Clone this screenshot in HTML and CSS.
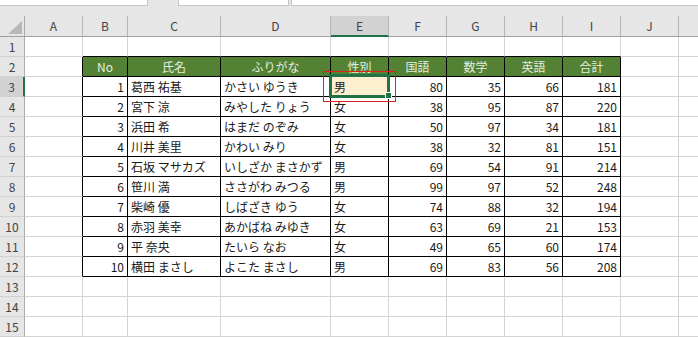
FILE: index.html
```html
<!DOCTYPE html>
<html lang="ja">
<head>
  <meta charset="UTF-8">
  <title>成績表</title>
  <link rel="stylesheet" href="styles.css">
</head>
<body>
  <div class="topbar">
    <div class="box box1"></div>
    <div class="box box2"></div>
    <div class="box box3"></div>
  </div>
  <div class="gap"></div>

  <div class="sheet">
    <div class="corner"><svg width="14" height="13" viewBox="0 0 14 13"><polygon points="0,13 14,13 14,0" fill="#b8b8b8"/></svg></div>
    <div class="cell ch">A</div><div class="cell ch">B</div><div class="cell ch">C</div><div class="cell ch">D</div><div class="cell ch sel">E</div><div class="cell ch">F</div><div class="cell ch">G</div><div class="cell ch">H</div><div class="cell ch">I</div><div class="cell ch">J</div><div class="cell ch last"></div>

    <div class="cell rh">1</div>
    <div class="cell"></div><div class="cell eb"></div><div class="cell eb"></div><div class="cell eb"></div><div class="cell eb"></div><div class="cell eb"></div><div class="cell eb"></div><div class="cell eb"></div><div class="cell eb"></div><div class="cell"></div><div class="cell last"></div>

    <div class="cell rh">2</div>
    <div class="cell er"></div><div class="cell hd">No</div><div class="cell hd">氏名</div><div class="cell hd">ふりがな</div><div class="cell hd">性別</div><div class="cell hd">国語</div><div class="cell hd">数学</div><div class="cell hd">英語</div><div class="cell hd">合計</div><div class="cell"></div><div class="cell last"></div>

    <div class="cell rh sel">3</div>
    <div class="cell er"></div><div class="cell td num">1</div><div class="cell td">葛西 祐基</div><div class="cell td">かさい ゆうき</div><div class="cell td fill">男</div><div class="cell td num">80</div><div class="cell td num">35</div><div class="cell td num">66</div><div class="cell td num">181</div><div class="cell"></div><div class="cell last"></div>

    <div class="cell rh">4</div>
    <div class="cell er"></div><div class="cell td num">2</div><div class="cell td">宮下 涼</div><div class="cell td">みやした りょう</div><div class="cell td">女</div><div class="cell td num">38</div><div class="cell td num">95</div><div class="cell td num">87</div><div class="cell td num">220</div><div class="cell"></div><div class="cell last"></div>

    <div class="cell rh">5</div>
    <div class="cell er"></div><div class="cell td num">3</div><div class="cell td">浜田 希</div><div class="cell td">はまだ のぞみ</div><div class="cell td">女</div><div class="cell td num">50</div><div class="cell td num">97</div><div class="cell td num">34</div><div class="cell td num">181</div><div class="cell"></div><div class="cell last"></div>

    <div class="cell rh">6</div>
    <div class="cell er"></div><div class="cell td num">4</div><div class="cell td">川井 美里</div><div class="cell td">かわい みり</div><div class="cell td">女</div><div class="cell td num">38</div><div class="cell td num">32</div><div class="cell td num">81</div><div class="cell td num">151</div><div class="cell"></div><div class="cell last"></div>

    <div class="cell rh">7</div>
    <div class="cell er"></div><div class="cell td num">5</div><div class="cell td">石坂 マサカズ</div><div class="cell td">いしざか まさかず</div><div class="cell td">男</div><div class="cell td num">69</div><div class="cell td num">54</div><div class="cell td num">91</div><div class="cell td num">214</div><div class="cell"></div><div class="cell last"></div>

    <div class="cell rh">8</div>
    <div class="cell er"></div><div class="cell td num">6</div><div class="cell td">笹川 満</div><div class="cell td">ささがわ みつる</div><div class="cell td">男</div><div class="cell td num">99</div><div class="cell td num">97</div><div class="cell td num">52</div><div class="cell td num">248</div><div class="cell"></div><div class="cell last"></div>

    <div class="cell rh">9</div>
    <div class="cell er"></div><div class="cell td num">7</div><div class="cell td">柴崎 優</div><div class="cell td">しばざき ゆう</div><div class="cell td">女</div><div class="cell td num">74</div><div class="cell td num">88</div><div class="cell td num">32</div><div class="cell td num">194</div><div class="cell"></div><div class="cell last"></div>

    <div class="cell rh">10</div>
    <div class="cell er"></div><div class="cell td num">8</div><div class="cell td">赤羽 美幸</div><div class="cell td">あかばね みゆき</div><div class="cell td">女</div><div class="cell td num">63</div><div class="cell td num">69</div><div class="cell td num">21</div><div class="cell td num">153</div><div class="cell"></div><div class="cell last"></div>

    <div class="cell rh">11</div>
    <div class="cell er"></div><div class="cell td num">9</div><div class="cell td">平 奈央</div><div class="cell td">たいら なお</div><div class="cell td">女</div><div class="cell td num">49</div><div class="cell td num">65</div><div class="cell td num">60</div><div class="cell td num">174</div><div class="cell"></div><div class="cell last"></div>

    <div class="cell rh">12</div>
    <div class="cell er"></div><div class="cell td num">10</div><div class="cell td">横田 まさし</div><div class="cell td">よこた まさし</div><div class="cell td">男</div><div class="cell td num">69</div><div class="cell td num">83</div><div class="cell td num">56</div><div class="cell td num">208</div><div class="cell"></div><div class="cell last"></div>

    <div class="cell rh">13</div>
    <div class="cell"></div><div class="cell"></div><div class="cell"></div><div class="cell"></div><div class="cell"></div><div class="cell"></div><div class="cell"></div><div class="cell"></div><div class="cell"></div><div class="cell"></div><div class="cell last"></div>

    <div class="cell rh">14</div>
    <div class="cell"></div><div class="cell"></div><div class="cell"></div><div class="cell"></div><div class="cell"></div><div class="cell"></div><div class="cell"></div><div class="cell"></div><div class="cell"></div><div class="cell"></div><div class="cell last"></div>

    <div class="cell rh">15</div>
    <div class="cell"></div><div class="cell"></div><div class="cell"></div><div class="cell"></div><div class="cell"></div><div class="cell"></div><div class="cell"></div><div class="cell"></div><div class="cell"></div><div class="cell"></div><div class="cell last"></div>
  </div>

  <!-- selected cell E3 -->
  <div class="selbox"></div>
  <div class="handle"></div>
  <div class="mark"></div>
</body>
</html>
```

FILE: styles.css
```css
* {
    box-sizing: border-box;
}
body {
    margin: 0;
    width: 698px;
    height: 337px;
    overflow: hidden;
    position: relative;
    background: #e6e6e6;
    font-family: "Noto Sans CJK JP", "Noto Sans", sans-serif;
    font-size: 12px;
}
.topbar {
    display: flex;
    height: 6px;
}
.box {
    background: #fff;
    border: 1px solid #c6c6c6;
    border-top: none;
}
.box1 { width: 148px; border-left: none; }
.box2 { width: 111px; margin-left: 30px; }
.box3 { flex: 1; margin-left: 2px; border-right: none; }
.gap { height: 10px; }

.sheet {
    display: grid;
    grid-template-columns: 25px 58px 45px 93px 110px repeat(6, 58px) 1fr;
    grid-template-rows: 21px;
    grid-auto-rows: 20px;
    background: #fff;
}
.cell {
    border-right: 1px solid #d4d4d4;
    border-bottom: 1px solid #d4d4d4;
    padding: 0 3px;
    line-height: 19px;
    white-space: nowrap;
    overflow: hidden;
    color: #1a1a1a;
}
.last { border-right: none; }

/* headers */
.corner {
    background: #e6e6e6;
    border-right: 1px solid #ababab;
    border-bottom: 1px solid #9f9f9f;
    display: flex;
    justify-content: flex-end;
    align-items: flex-end;
    padding: 0 2px 2px 0;
}
.corner svg { display: block; }
.ch {
    background: #e6e6e6;
    border-right-color: #b4b4b4;
    border-bottom-color: #9f9f9f;
    text-align: center;
    line-height: 20px;
    color: #444;
}
.ch.sel {
    background: #d2d2d2;
    border-bottom: 2px solid #217346;
    line-height: 19px;
}
.rh {
    background: #e6e6e6;
    border-right-color: #ababab;
    border-bottom-color: #d0d0d0;
    text-align: center;
    padding: 0;
    color: #444;
}
.rh.sel {
    background: #d2d2d2;
    border-right: 2px solid #217346;
}

/* table */
.hd {
    background: #548235;
    color: #e6eedf;
    text-align: center;
    border-right-color: #000;
    border-bottom-color: #000;
}
.td { border-right-color: #000; border-bottom-color: #000; }
.num { text-align: right; }
.er { border-right-color: #000; }
.eb { border-bottom-color: #000; }
.fill { background: #fdefcf; }

/* selection overlay */
.selbox {
    position: absolute;
    left: 329px;
    top: 74px;
    width: 61px;
    height: 24px;
    border: 3px solid #217346;
}
.handle {
    position: absolute;
    left: 385px;
    top: 92px;
    width: 7px;
    height: 7px;
    background: #217346;
    border: 1px solid #fff;
}
.mark {
    position: absolute;
    left: 323px;
    top: 71px;
    width: 73px;
    height: 31px;
    border: 1px solid #e0201c;
}
```
